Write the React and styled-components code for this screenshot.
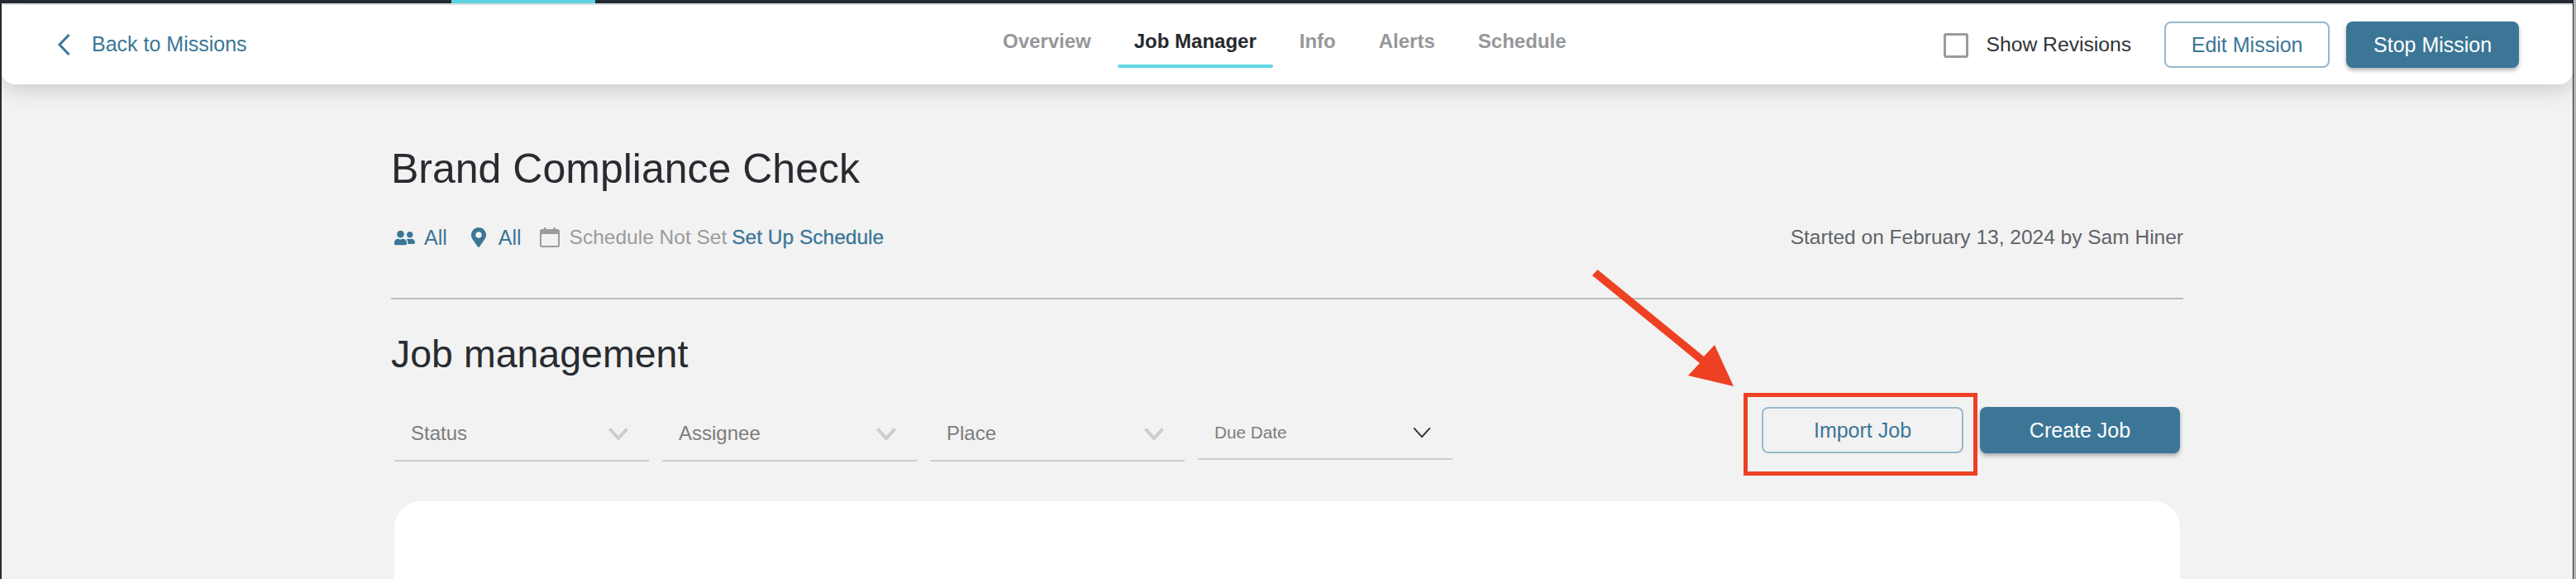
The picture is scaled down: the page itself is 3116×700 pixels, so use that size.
import React from "react";
import styled, { createGlobalStyle } from "styled-components";
import { FaUserFriends, FaMapMarkerAlt } from "react-icons/fa";

const BLUE = "#3b7696";

const GlobalStyle = createGlobalStyle`
  html, body {
    margin: 0;
    padding: 0;
    background: #b5b5b5;
    font-family: "Liberation Sans", Arial, sans-serif;
  }
`;

function Chevron({ color = "#ccc", weight = 4, width = 24, height = 15 }) {
  return (
    <svg width={width} height={height} viewBox="0 0 24 15" fill="none">
      <polyline points="1.5,1.5 12,13 22.5,1.5" stroke={color} strokeWidth={weight} />
    </svg>
  );
}

function CalendarIcon() {
  return (
    <svg width="24" height="24" viewBox="0 0 24 24" fill="none">
      <rect x="1" y="3" width="22" height="20" rx="1.5" stroke="#9b9b9b" strokeWidth="2" />
      <rect x="1" y="3" width="22" height="5" fill="#9b9b9b" />
      <rect x="5" y="0" width="2.5" height="5" fill="#9b9b9b" />
      <rect x="16.5" y="0" width="2.5" height="5" fill="#9b9b9b" />
    </svg>
  );
}

function App() {
  return (
    <Page>
      <GlobalStyle />
      <TopStrip>
        <StripAccent />
      </TopStrip>
      <Header>
        <BackLink>
          <svg width="15" height="26" viewBox="0 0 15 26" fill="none">
            <polyline points="13.5,1 2,13 13.5,25" stroke={BLUE} strokeWidth="3" />
          </svg>
          Back to Missions
        </BackLink>
        <Tabs>
          {TABS.map(tab => (
            <Tab key={tab} $active={tab === "Job Manager"}>
              {tab}
            </Tab>
          ))}
        </Tabs>
        <HeaderActions>
          <Checkbox />
          <RevisionLabel>Show Revisions</RevisionLabel>
          <OutlineButton $width={200}>Edit Mission</OutlineButton>
          <SolidButton $width={209}>Stop Mission</SolidButton>
        </HeaderActions>
      </Header>
      <Main>
        <Title>Brand Compliance Check</Title>
        <MetaRow>
          <MetaLeft>
            <FaUserFriends size={25} color={BLUE} />
            <MetaValue $after={26}>All</MetaValue>
            <PinIcon size={24} color={BLUE} />
            <MetaValue $after={22}>All</MetaValue>
            <CalendarIcon />
            <ScheduleText>Schedule Not Set</ScheduleText>
            <ScheduleLink>Set Up Schedule</ScheduleLink>
          </MetaLeft>
          <StartedText>Started on February 13, 2024 by Sam Hiner</StartedText>
        </MetaRow>
        <Divider />
        <SectionTitle>Job management</SectionTitle>
        <FilterRow>
          <Filters>
            {FILTERS.map(name => (
              <FilterSelect key={name}>
                <FilterLabel>{name}</FilterLabel>
                <Chevron />
              </FilterSelect>
            ))}
            <DateSelect>
              <DateLabel>Due Date</DateLabel>
              <Chevron color="#2a2e33" weight={2} height={14} />
            </DateSelect>
          </Filters>
          <FilterButtons>
            <OutlineButton $width={244} $flat>Import Job</OutlineButton>
            <SolidButton $width={242}>Create Job</SolidButton>
          </FilterButtons>
        </FilterRow>
        <Card />
      </Main>
      <RedBox />
      <ArrowDrawing viewBox="0 0 180 150" width="180" height="150">
        <polygon points="7.5,6 136,111 149,97 172,147 117,134 131,119 1,13" fill="#ee4023" />
      </ArrowDrawing>
    </Page>
  );
}

const TABS = ["Overview", "Job Manager", "Info", "Alerts", "Schedule"];
const FILTERS = ["Status", "Assignee", "Place"];

const Page = styled.div`
  position: relative;
  width: 3113px;
  height: 700px;
  overflow: hidden;
  background: #f2f2f2;
  border-left: 2px solid #26292e;
  border-right: 1px solid #26292e;
  box-sizing: border-box;
`;

const TopStrip = styled.div`
  height: 4px;
  padding-left: 544px;
  background: #262b31;
  border-bottom: 2px solid #e6e7e8;
`;

const StripAccent = styled.div`
  width: 174px;
  height: 4px;
  background: #62d9ea;
`;

const Header = styled.header`
  display: grid;
  grid-template-columns: 1123px auto 1fr;
  align-items: center;
  height: 96px;
  padding-left: 68px;
  box-sizing: border-box;
  background: #fff;
  border-radius: 0 0 16px 16px;
  box-shadow: 0 6px 24px rgba(40, 44, 52, 0.2);
`;

const BackLink = styled.a`
  display: flex;
  align-items: center;
  gap: 26px;
  color: ${BLUE};
  font-size: 25px;
  margin-top: -1px;
`;

const Tabs = styled.nav`
  display: flex;
  gap: 12px;
  align-self: stretch;
`;

const Tab = styled.div`
  position: relative;
  padding: 30px 20px 0;
  font-size: 24px;
  font-weight: 700;
  line-height: 28px;
  color: ${props => (props.$active ? "#26292e" : "#96979a")};

  &::after {
    content: "";
    display: ${props => (props.$active ? "block" : "none")};
    position: absolute;
    left: 0;
    right: 0;
    top: 72px;
    height: 4px;
    border-radius: 2px;
    background: #62d9ea;
  }
`;

const HeaderActions = styled.div`
  display: flex;
  align-items: center;
  margin-left: 437px;
`;

const Checkbox = styled.span`
  width: 30px;
  height: 30px;
  box-sizing: border-box;
  border: 3px solid #9b9b9b;
  border-radius: 3px;
  margin-top: 2px;
`;

const RevisionLabel = styled.span`
  margin: 0 40px 0 21px;
  font-size: 24.7px;
  color: #2f3237;
`;

const OutlineButton = styled.button`
  width: ${props => props.$width}px;
  height: 56px;
  padding: 0;
  background: ${props => (props.$flat ? "transparent" : "#fff")};
  border: 2px solid #97b9cb;
  border-radius: 8px;
  color: ${BLUE};
  font: 25px "Liberation Sans", Arial, sans-serif;
`;

const SolidButton = styled.button`
  width: ${props => props.$width}px;
  height: 56px;
  margin-left: 20px;
  padding: 0;
  background: ${BLUE};
  border: 0;
  border-radius: 8px;
  box-shadow: 0 3px 5px rgba(0, 0, 0, 0.3);
  color: #fff;
  font: 25px "Liberation Sans", Arial, sans-serif;
`;

const Main = styled.main`
  width: 2168px;
  margin-left: 471px;
`;

const Title = styled.h1`
  margin: 0;
  padding-top: 74px;
  font-size: 50px;
  font-weight: 400;
  line-height: 56px;
  color: #282b30;
`;

const MetaRow = styled.div`
  display: flex;
  align-items: center;
  justify-content: space-between;
  height: 30px;
  margin-top: 40px;
`;

const MetaLeft = styled.div`
  display: flex;
  align-items: center;
  padding-left: 4px;
`;

const PinIcon = styled(FaMapMarkerAlt)`
  margin-right: 1px;
`;

const MetaValue = styled.span`
  margin: 0 ${props => props.$after}px 0 11px;
  font-size: 25px;
  color: ${BLUE};
`;

const ScheduleText = styled.span`
  margin: 0 6px 0 12px;
  font-size: 24.5px;
  color: #9b9b9b;
`;

const ScheduleLink = styled.a`
  font-size: 24.5px;
  color: ${BLUE};
  -webkit-text-stroke: 0.3px ${BLUE};
`;

const StartedText = styled.span`
  font-size: 24.5px;
  color: #5f6368;
`;

const Divider = styled.hr`
  height: 2px;
  margin: 58px 0 0;
  border: 0;
  background: #bdbdbd;
`;

const SectionTitle = styled.h2`
  margin: 0;
  padding-top: 41px;
  font-size: 46.5px;
  font-weight: 400;
  line-height: 50px;
  color: #282b30;
`;

const FilterRow = styled.div`
  display: flex;
  justify-content: space-between;
  padding: 0 4px;
  margin-top: 39px;
`;

const Filters = styled.div`
  display: flex;
  gap: 16px;
`;

const FilterSelect = styled.div`
  display: flex;
  align-items: center;
  justify-content: space-between;
  width: 308px;
  height: 66px;
  padding: 0 25px 0 20px;
  box-sizing: border-box;
  border-bottom: 2px solid #cdcdcd;
`;

const DateSelect = styled(FilterSelect)`
  height: 64px;
`;

const FilterLabel = styled.span`
  font-size: 24px;
  color: #7d7d7d;
`;

const DateLabel = styled.span`
  font-size: 20.7px;
  color: #7d7d7d;
`;

const FilterButtons = styled.div`
  display: flex;
  align-items: flex-start;
`;

const Card = styled.section`
  height: 200px;
  margin: 48px 4px 0;
  background: #fff;
  border-radius: 32px;
`;

const RedBox = styled.div`
  position: absolute;
  left: 2107px;
  top: 475px;
  width: 283px;
  height: 100px;
  box-sizing: border-box;
  border: 5px solid #ee4023;
`;

const ArrowDrawing = styled.svg`
  position: absolute;
  left: 1923px;
  top: 320px;
`;

export default App;
